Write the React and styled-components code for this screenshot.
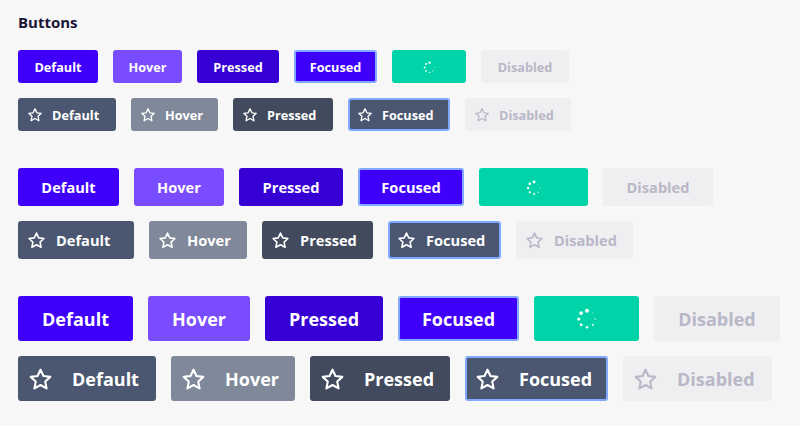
import React from "react";
import styled, { createGlobalStyle, css } from "styled-components";

const Global = createGlobalStyle`
  html, body { margin: 0; padding: 0; background: #f7f7f7; }
  body { font-family: "Open Sans", "Noto Sans", sans-serif; }
  * { box-sizing: border-box; }
`;

const Page = styled.div`
  width: 800px;
  height: 426px;
  padding: 12px 18px 0;
  background: #f7f7f7;
`;

const Title = styled.h2`
  margin: 0 0 18px;
  font-size: 15px;
  line-height: 20px;
  font-weight: 700;
  color: #1b1537;
`;

const Groups = styled.div`
  display: flex;
  flex-direction: column;
  gap: 37px;
`;

const Group = styled.div`
  display: flex;
  flex-direction: column;
  gap: 15px;
`;

const Row = styled.div`
  display: flex;
  align-items: center;
  gap: 15px;
`;

const sizes = {
  sm: { h: 33, fs: 12.7, il: 9, ig: 9, icon: 16, spin: 13 },
  md: { h: 38, fs: 14.6, il: 9, ig: 10, icon: 19, spin: 16 },
  lg: { h: 45, fs: 18, il: 10, ig: 19, icon: 25, spin: 22 },
};

const variants = {
  primary: { bg: "#3f00fb", fg: "#ffffff" },
  primaryHover: { bg: "#7a4cff", fg: "#ffffff" },
  primaryPressed: { bg: "#3600d5", fg: "#ffffff" },
  loading: { bg: "#00d3a7", fg: "#ffffff" },
  disabled: { bg: "#efeff1", fg: "#b9b7c8" },
  secondary: { bg: "#4b5770", fg: "#ffffff" },
  secondaryHover: { bg: "#7f899a", fg: "#ffffff" },
  secondaryPressed: { bg: "#424b5d", fg: "#ffffff" },
};

const Button = styled.button`
  display: inline-flex;
  align-items: center;
  justify-content: center;
  flex: none;
  width: ${(p) => p.$width}px;
  height: ${(p) => sizes[p.$size].h}px;
  padding: 1px 0 0;
  font-family: "Open Sans", "Noto Sans", sans-serif;
  font-size: ${(p) => sizes[p.$size].fs}px;
  font-weight: 700;
  line-height: 1;
  white-space: nowrap;
  background: ${(p) => variants[p.$variant].bg};
  color: ${(p) => variants[p.$variant].fg};
  border: 2px solid ${(p) => (p.$focused ? "#80a9ff" : "transparent")};
  border-radius: 3px;
  cursor: pointer;
  ${(p) =>
    p.$icon &&
    css`
      justify-content: flex-start;
      padding-left: ${sizes[p.$size].il - 2}px;
      gap: ${sizes[p.$size].ig}px;
    `}
`;

const StarIcon = ({ size }) => (
  <svg width={size} height={size} viewBox="0 0 24 24" fill="none">
    <polygon
      points="12,2.6 14.85,8.7 21.4,9.5 16.55,14 17.85,20.6 12,17.3 6.15,20.6 7.45,14 2.6,9.5 9.15,8.7"
      stroke="currentColor"
      strokeWidth="2"
      strokeLinejoin="round"
    />
  </svg>
);

const dots = [
  { a: -90, r: 1.9, o: 1 },
  { a: -135, r: 1.7, o: 1 },
  { a: 180, r: 1.5, o: 1 },
  { a: 135, r: 1.35, o: 1 },
  { a: 90, r: 1.2, o: 0.95 },
  { a: 45, r: 1.05, o: 0.8 },
  { a: 0, r: 0.9, o: 0.5 },
  { a: -45, r: 0.8, o: 0.3 },
];

const Spinner = ({ size }) => (
  <svg width={size} height={size} viewBox="0 0 24 24">
    {dots.map((d, i) => (
      <circle
        key={i}
        cx={12 + 9 * Math.cos((d.a * Math.PI) / 180)}
        cy={12 + 9 * Math.sin((d.a * Math.PI) / 180)}
        r={d.r * 1.15}
        fill="#ffffff"
        opacity={d.o}
      />
    ))}
  </svg>
);

const widths = {
  sm: { primary: [80, 69, 82, 83, 74, 88], secondary: [98, 87, 100, 102, 106] },
  md: { primary: [101, 90, 104, 106, 109, 110], secondary: [116, 98, 111, 113, 117] },
  lg: { primary: [115, 102, 118, 121, 105, 126], secondary: [138, 124, 140, 143, 149] },
};

const primaryRow = [
  { label: "Default", variant: "primary" },
  { label: "Hover", variant: "primaryHover" },
  { label: "Pressed", variant: "primaryPressed" },
  { label: "Focused", variant: "primary", focused: true },
  { loading: true, variant: "loading" },
  { label: "Disabled", variant: "disabled", disabled: true },
];

const secondaryRow = [
  { label: "Default", variant: "secondary" },
  { label: "Hover", variant: "secondaryHover" },
  { label: "Pressed", variant: "secondaryPressed" },
  { label: "Focused", variant: "secondary", focused: true },
  { label: "Disabled", variant: "disabled", disabled: true },
];

const SizeGroup = ({ size }) => {
  const s = sizes[size];
  const w = widths[size];
  return (
    <Group>
      <Row>
        {primaryRow.map((b, i) => (
          <Button
            key={i}
            $size={size}
            $variant={b.variant}
            $focused={b.focused}
            $width={w.primary[i]}
            disabled={b.disabled}
            aria-label={b.loading ? "Loading" : undefined}
          >
            {b.loading ? <Spinner size={s.spin} /> : b.label}
          </Button>
        ))}
      </Row>
      <Row>
        {secondaryRow.map((b, i) => (
          <Button
            key={i}
            $size={size}
            $variant={b.variant}
            $focused={b.focused}
            $width={w.secondary[i]}
            $icon
            disabled={b.disabled}
          >
            <StarIcon size={s.icon} />
            {b.label}
          </Button>
        ))}
      </Row>
    </Group>
  );
};

export default function App() {
  return (
    <>
      <Global />
      <Page>
        <Title>Buttons</Title>
        <Groups>
          <SizeGroup size="sm" />
          <SizeGroup size="md" />
          <SizeGroup size="lg" />
        </Groups>
      </Page>
    </>
  );
}
